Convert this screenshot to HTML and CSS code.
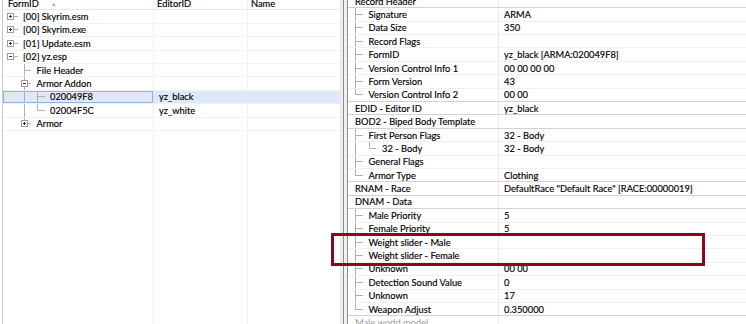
FILE: index.html
```html
<!DOCTYPE html>
<html lang="en">
<head>
    <meta charset="UTF-8">
    <title>yz.esp - Armor Addon</title>
    <link rel="stylesheet" href="styles.css">
</head>
<body>

<div class="app">

    <!-- records tree -->
    <div class="left">
        <div class="list">
            <div class="row head">
                <div class="c1"><span class="htext">FormID</span><span class="sort">▲</span></div>
                <div class="c2">EditorID</div>
                <div class="c3">Name</div>
            </div>
            <div class="row">
                <div class="c1"><span class="g bx plus"></span><span class="txt">[00] Skyrim.esm</span></div>
                <div class="c2"></div><div class="c3"></div>
            </div>
            <div class="row">
                <div class="c1"><span class="g bx plus"></span><span class="txt">[00] Skyrim.exe</span></div>
                <div class="c2"></div><div class="c3"></div>
            </div>
            <div class="row">
                <div class="c1"><span class="g bx plus"></span><span class="txt">[01] Update.esm</span></div>
                <div class="c2"></div><div class="c3"></div>
            </div>
            <div class="row">
                <div class="c1"><span class="g bx minus"></span><span class="txt">[02] yz.esp</span></div>
                <div class="c2"></div><div class="c3"></div>
            </div>
            <div class="row">
                <div class="c1"><span class="g"></span><span class="g t"></span><span class="txt">File Header</span></div>
                <div class="c2"></div><div class="c3"></div>
            </div>
            <div class="row">
                <div class="c1"><span class="g"></span><span class="g bx minus through"></span><span class="txt">Armor Addon</span></div>
                <div class="c2"></div><div class="c3"></div>
            </div>
            <div class="row sel">
                <div class="c1"><span class="g"></span><span class="g v"></span><span class="g t"></span><span class="txt">020049F8</span></div>
                <div class="c2">yz_black</div><div class="c3"></div>
            </div>
            <div class="row">
                <div class="c1"><span class="g"></span><span class="g v"></span><span class="g l"></span><span class="txt">02004F5C</span></div>
                <div class="c2">yz_white</div><div class="c3"></div>
            </div>
            <div class="row">
                <div class="c1"><span class="g"></span><span class="g bx plus last"></span><span class="txt">Armor</span></div>
                <div class="c2"></div><div class="c3"></div>
            </div>
        </div>
    </div>

    <div class="split"></div>

    <!-- record view -->
    <div class="right">
        <div class="plist">
            <div class="prow top"><div class="pn"><span class="txt">Record Header</span></div><div class="pv"></div></div>
            <div class="prow"><div class="pn"><span class="g t"></span><span class="txt">Signature</span></div><div class="pv">ARMA</div></div>
            <div class="prow"><div class="pn"><span class="g t"></span><span class="txt">Data Size</span></div><div class="pv">350</div></div>
            <div class="prow"><div class="pn"><span class="g t"></span><span class="txt">Record Flags</span></div><div class="pv"></div></div>
            <div class="prow"><div class="pn"><span class="g t"></span><span class="txt">FormID</span></div><div class="pv">yz_black [ARMA:020049F8]</div></div>
            <div class="prow"><div class="pn"><span class="g t"></span><span class="txt">Version Control Info 1</span></div><div class="pv">00 00 00 00</div></div>
            <div class="prow"><div class="pn"><span class="g t"></span><span class="txt">Form Version</span></div><div class="pv">43</div></div>
            <div class="prow"><div class="pn"><span class="g l"></span><span class="txt">Version Control Info 2</span></div><div class="pv">00 00</div></div>

            <div class="prow top"><div class="pn"><span class="txt">EDID - Editor ID</span></div><div class="pv">yz_black</div></div>

            <div class="prow top"><div class="pn"><span class="txt">BOD2 - Biped Body Template</span></div><div class="pv"></div></div>
            <div class="prow"><div class="pn"><span class="g t"></span><span class="txt">First Person Flags</span></div><div class="pv">32 - Body</div></div>
            <div class="prow"><div class="pn"><span class="g v"></span><span class="g l"></span><span class="txt">32 - Body</span></div><div class="pv">32 - Body</div></div>
            <div class="prow"><div class="pn"><span class="g t"></span><span class="txt">General Flags</span></div><div class="pv"></div></div>
            <div class="prow"><div class="pn"><span class="g l"></span><span class="txt">Armor Type</span></div><div class="pv">Clothing</div></div>

            <div class="prow top"><div class="pn"><span class="txt">RNAM - Race</span></div><div class="pv">DefaultRace "Default Race" [RACE:00000019]</div></div>

            <div class="prow top"><div class="pn"><span class="txt">DNAM - Data</span></div><div class="pv"></div></div>
            <div class="prow"><div class="pn"><span class="g t"></span><span class="txt">Male Priority</span></div><div class="pv">5</div></div>
            <div class="prow"><div class="pn"><span class="g t"></span><span class="txt">Female Priority</span></div><div class="pv">5</div></div>
            <div class="prow"><div class="pn"><span class="g t"></span><span class="txt">Weight slider - Male</span></div><div class="pv"></div></div>
            <div class="prow"><div class="pn"><span class="g t"></span><span class="txt">Weight slider - Female</span></div><div class="pv"></div></div>
            <div class="prow"><div class="pn"><span class="g t"></span><span class="txt">Unknown</span></div><div class="pv">00 00</div></div>
            <div class="prow"><div class="pn"><span class="g t"></span><span class="txt">Detection Sound Value</span></div><div class="pv">0</div></div>
            <div class="prow"><div class="pn"><span class="g t"></span><span class="txt">Unknown</span></div><div class="pv">17</div></div>
            <div class="prow"><div class="pn"><span class="g l"></span><span class="txt">Weapon Adjust</span></div><div class="pv">0.350000</div></div>

            <div class="prow top off"><div class="pn"><span class="txt">Male world model</span></div><div class="pv"></div></div>
        </div>
    </div>

    <!-- highlight around the weight slider rows -->
    <div class="mark"></div>
</div>

</body>
</html>
```

FILE: styles.css
```css
/* general */
body {
    margin: 0;
    width: 746px;
    height: 324px;
    overflow: hidden;
    background: #fff;
    color: #000;
    font-family: Lato, "Liberation Sans", sans-serif;
    font-size: 9.3px;
    -webkit-text-stroke: 0.15px #000;
}

.app {
    position: relative;
    display: flex;
    height: 324px;
}

/* left tree */
.left {
    flex: none;
    width: 337px;
    margin-left: 2px;
    border-left: 1px solid #c8c8d2;
    background:
        linear-gradient(#f0f0f0, #f0f0f0) 150px 0 / 1px 100% no-repeat,
        linear-gradient(#f0f0f0, #f0f0f0) 244px 0 / 1px 100% no-repeat;
}

.list {
    margin-top: -3px;
}

.row {
    display: flex;
    align-items: center;
    height: 13.4px;
    box-sizing: border-box;
    border-bottom: 1px solid #f2f2f2;
}

.row.head {
    border-bottom-color: #e8e8e8;
}

.c1 {
    flex: none;
    width: 150px;
    height: 100%;
    padding-left: 1px;
    box-sizing: border-box;
    display: flex;
    align-items: center;
}

.c2 {
    flex: none;
    width: 94px;
    padding-left: 6px;
    box-sizing: border-box;
}

.c3 {
    flex: 1;
    padding-left: 4px;
}

.head .c1 {
    padding-left: 5px;
}

.head .c2 {
    padding-left: 4px;
}

.sort {
    margin-left: 12px;
    color: #b5b5b5;
    font-size: 6px;
    -webkit-text-stroke: 0;
}

.row.sel {
    background: #dde9f8;
}

.sel .c1 {
    box-shadow: inset 0 0 0 1px #8db4e2;
}

.txt {
    padding-left: 6px;
    white-space: nowrap;
}

.c1 .txt {
    padding-left: 5.5px;
}

/* tree guides */
.g {
    flex: none;
    width: 13.5px;
    align-self: stretch;
}

.g.v {
    background: linear-gradient(#b0b0b0, #b0b0b0) 6px 0 / 1px 100% no-repeat;
}

.g.t {
    background:
        linear-gradient(#b0b0b0, #b0b0b0) 6px 0 / 1px 100% no-repeat,
        linear-gradient(#b0b0b0, #b0b0b0) 6px 50% / 8px 1px no-repeat;
}

.g.l {
    background:
        linear-gradient(#b0b0b0, #b0b0b0) 6px 0 / 1px 50% no-repeat,
        linear-gradient(#b0b0b0, #b0b0b0) 6px 50% / 8px 1px no-repeat;
}

.g.bx {
    display: flex;
    align-items: center;
    background: linear-gradient(#b0b0b0, #b0b0b0) 10px 50% / 5px 1px no-repeat;
}

.g.bx.through {
    background:
        linear-gradient(#b0b0b0, #b0b0b0) 6px 0 / 1px 100% no-repeat,
        linear-gradient(#b0b0b0, #b0b0b0) 10px 50% / 5px 1px no-repeat;
}

.g.bx.last {
    background:
        linear-gradient(#b0b0b0, #b0b0b0) 6px 0 / 1px 50% no-repeat,
        linear-gradient(#b0b0b0, #b0b0b0) 10px 50% / 5px 1px no-repeat;
}

.g.bx::before {
    content: '';
    width: 5px;
    height: 5px;
    margin-left: 3px;
    border: 1px solid #9c9c9c;
    background-color: #fff;
}

.g.plus::before {
    background:
        linear-gradient(#333, #333) center / 3px 1px no-repeat,
        linear-gradient(#333, #333) center / 1px 3px no-repeat,
        #fff;
}

.g.minus::before {
    background:
        linear-gradient(#333, #333) center / 3px 1px no-repeat,
        #fff;
}

/* splitter */
.split {
    flex: none;
    width: 8px;
    background: linear-gradient(to right, #ececec 0 3px, #8e8e8e 3px 4px, #f0f0f0 4px 7px, #8e8e8e 7px 8px);
}

/* right record view */
.right {
    flex: 1;
    background: linear-gradient(#e6e6e6, #e6e6e6) 150px 0 / 1px 100% no-repeat;
}

.plist {
    margin-top: -5.1px;
}

.prow {
    display: flex;
    align-items: center;
    height: 13.4px;
    box-sizing: border-box;
    border-bottom: 1px solid #f0f0f0;
}

.prow.top {
    border-bottom-color: #d2d2d2;
    box-shadow: 0 -1px 0 #d2d2d2;
}

.prow.off {
    color: #9c9c9c;
    -webkit-text-stroke: 0;
}

.pn {
    flex: none;
    width: 150px;
    height: 100%;
    padding-left: 1px;
    box-sizing: border-box;
    display: flex;
    align-items: center;
}

.pv {
    flex: 1;
    padding-left: 6px;
    white-space: nowrap;
}

/* red annotation box */
.mark {
    position: absolute;
    left: 331px;
    top: 233px;
    width: 368px;
    height: 27px;
    border: 3px solid #86091d;
}
```
